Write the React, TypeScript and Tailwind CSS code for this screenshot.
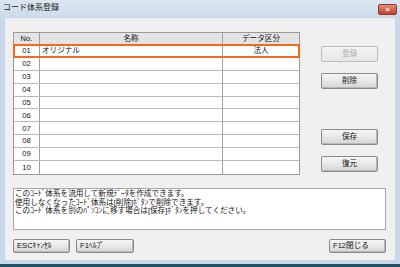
import React from "react";

const font = { fontFamily: '"Liberation Sans", "Noto Sans CJK JP", sans-serif' };

function Btn({ label, disabled, className = "" }: { label: string; disabled?: boolean; className?: string }) {
  return (
    <div
      className={
        "flex items-center justify-center rounded-[2px] border text-[7.6px] leading-none " +
        (disabled
          ? "border-[#bcbcbc] bg-gradient-to-b from-[#f4f4f4] to-[#e6e6e6] text-[#b0b0b0]"
          : "border-[#8a8a8a] bg-gradient-to-b from-[#f6f6f6] via-[#e8e8e8] to-[#d4d4d4] text-[#111] shadow-[inset_-1px_-1px_0_#b8b8b8]") +
        " " +
        className
      }
    >
      {label}
    </div>
  );
}

export default function App() {
  const rows = ["01", "02", "03", "04", "05", "06", "07", "08", "09", "10"];
  return (
    <div className="w-[400px] h-[267px] bg-[#c8d8e9] flex flex-col overflow-hidden" style={font}>
      {/* title bar */}
      <div className="h-[17px] flex items-start justify-between bg-gradient-to-b from-[#dbe6f1] to-[#cddbea] pl-[3px] pr-[3px]">
        <span className="text-[8px] leading-none mt-[4px] text-[#1a1a1a]">コード体系登録</span>
        <div className="mt-[4px] w-[19px] h-[11px] rounded-[2px] border border-[#8c3a2e] bg-gradient-to-b from-[#e48d7b] to-[#c13e2a] flex items-center justify-center text-white text-[8px] leading-none font-bold">
          ×
        </div>
      </div>
      {/* client */}
      <div className="mx-[5px] mt-[1px] h-[242px] bg-[#f0f0f0] pl-[7px] pt-[13px] flex flex-col border-l border-t border-[#e6edf4]">
        <div className="flex">
          {/* table */}
          <div className="w-[287px] h-[143px] border border-[#9a9a9a] bg-white flex flex-col text-[7.6px] leading-none text-[#111]">
            <div className="h-[12px] flex bg-[#e4e4e4] border-b border-[#9a9a9a]">
              <div className="w-[26px] border-r border-[#a0a0a0] flex items-center justify-center">No.</div>
              <div className="w-[183px] border-r border-[#a0a0a0] flex items-center justify-center">名称</div>
              <div className="flex-1 flex items-center justify-center">データ区分</div>
            </div>
            {rows.map((r, i) => (
              <div
                key={r}
                className={
                  "h-[13px] flex relative " + (i < 9 ? "border-b border-[#b8b8b8]" : "")
                }
              >
                <div className="w-[26px] border-r border-[#a0a0a0] flex items-center justify-center">{r}</div>
                <div className="w-[183px] border-r border-[#a0a0a0] flex items-center pl-[2px]">
                  {i === 0 ? "オリジナル" : ""}
                </div>
                <div className="flex-1 flex items-center justify-center">{i === 0 ? "法人" : ""}</div>
                {i === 0 && (
                  <div className="absolute left-[-1px] right-[-1px] top-[-1px] bottom-[-1px] border-2 border-[#f26a1e]" />
                )}
              </div>
            ))}
          </div>
          {/* right buttons */}
          <div className="ml-[21px] mt-[14px] flex flex-col">
            <Btn label="登録" disabled className="w-[57px] h-[16px]" />
            <Btn label="削除" className="w-[57px] h-[16px] mt-[11px]" />
            <Btn label="保存" className="w-[57px] h-[16px] mt-[40px]" />
            <Btn label="復元" className="w-[57px] h-[16px] mt-[11px]" />
          </div>
        </div>
        {/* textbox */}
        <div className="mt-[13px] w-[373px] h-[42px] border border-[#a8a8a8] bg-white px-[1px] pt-[1px] text-[7.6px] leading-[8.5px] text-[#111]">
          <div>このｺｰﾄﾞ体系を流用して新規ﾃﾞｰﾀを作成できます。</div>
          <div>使用しなくなったｺｰﾄﾞ体系は[削除]ﾎﾞﾀﾝで削除できます。</div>
          <div>このｺｰﾄﾞ体系を別のﾊﾟｿｺﾝに移す場合は[保存]ﾎﾞﾀﾝを押してください。</div>
        </div>
        {/* bottom buttons */}
        <div className="mt-[9px] flex w-[373px]">
          <Btn label="ESCｷｬﾝｾﾙ" className="w-[57px] h-[14px] justify-start pl-[3px]" />
          <Btn label="F1ﾍﾙﾌﾟ" className="w-[58px] h-[14px] ml-[6px] justify-start pl-[3px]" />
          <div className="flex-1" />
          <Btn label="F12閉じる" className="w-[57px] h-[14px] justify-start pl-[3px]" />
        </div>
      </div>
      <div className="flex-1 bg-[#c8d8e9]" />
      <div className="h-[3px] bg-[#1f5266]" />
    </div>
  );
}
